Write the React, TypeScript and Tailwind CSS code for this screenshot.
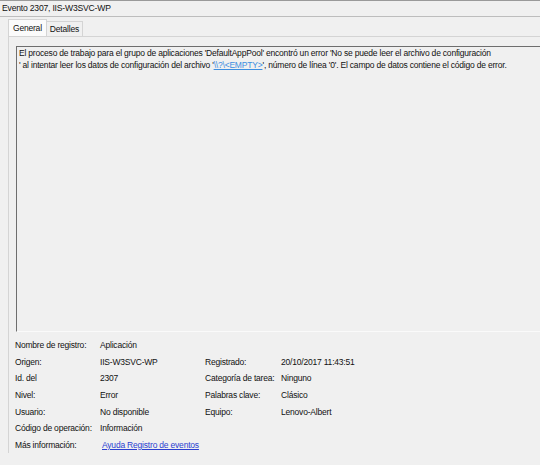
import React from "react";

const rows: [string, React.ReactNode, string?, string?][] = [
  ["Nombre de registro:", "Aplicación"],
  ["Origen:", "IIS-W3SVC-WP", "Registrado:", "20/10/2017 11:43:51"],
  ["Id. del", "2307", "Categoría de tarea:", "Ninguno"],
  ["Nivel:", "Error", "Palabras clave:", "Clásico"],
  ["Usuario:", "No disponible", "Equipo:", "Lenovo-Albert"],
  ["Código de operación:", "Información"],
];

export default function App() {
  return (
    <div className="w-[540px] h-[465px] overflow-hidden whitespace-nowrap bg-[#f0f0f0] text-[#111] text-[8.5px] tracking-[-0.2px] font-['Liberation_Sans',Arial,sans-serif]">
      <div className="h-[17px] border-t border-[#9a9a9a] border-b border-b-[#bdbdbd] bg-[#f0f0f0] px-[2px] flex items-center text-[8.6px]">
        Evento 2307, IIS-W3SVC-WP
      </div>

      <div className="flex pl-[8px] pt-[2px]">
        <div className="h-[17px] px-[4px] flex items-center bg-[#fbfbfb] border border-b-0 border-[#d4d4d4]">
          General
        </div>
        <div className="h-[15px] mt-[2px] px-[3px] flex items-center border-t border-r border-[#d4d4d4]">
          Detalles
        </div>
      </div>

      <div className="ml-[8px] border-t border-l border-[#d4d4d4] pl-[7px] pt-[9px]">
        <div className="h-[286px] border-t border-l border-[#6e6e6e] border-b border-b-[#fafafa] px-[2px] leading-[12px]">
          <div>
            El proceso de trabajo para el grupo de aplicaciones 'DefaultAppPool' encontró un error 'No se puede leer el archivo de configuración
          </div>
          <div>
            ' al intentar leer los datos de configuración del archivo '
            <span className="text-[#3d8ee0] underline">\\?\&lt;EMPTY&gt;</span>', número de línea '0'. El campo de datos contiene el código de error.
          </div>
        </div>

        <div className="pt-[5px] -ml-[1px]">
          {rows.map(([a, b, c, d], i) => (
            <div key={i} className="h-[16.65px] flex items-center">
              <div className="w-[85px]">{a}</div>
              <div className="w-[105px]">{b}</div>
              {c && <div className="w-[76px]">{c}</div>}
              {d && <div>{d}</div>}
            </div>
          ))}
          <div className="h-[16.65px] flex items-center">
            <div className="w-[87px]">Más información:</div>
            <div className="text-[#2b3fd1] underline">Ayuda Registro de eventos</div>
          </div>
        </div>
      </div>
    </div>
  );
}
